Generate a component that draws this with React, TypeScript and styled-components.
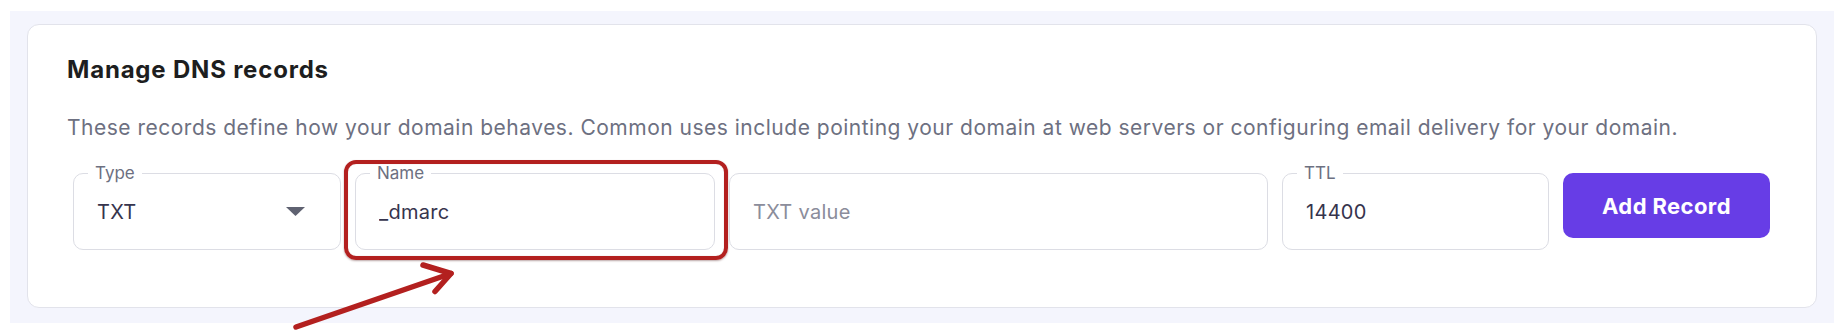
import React from "react";
import styled, { createGlobalStyle } from "styled-components";

const GlobalStyle = createGlobalStyle`
  html, body {
    margin: 0;
    padding: 0;
    background: #ffffff;
  }
  body {
    font-family: Inter, "Liberation Sans", Arial, sans-serif;
    -webkit-font-smoothing: antialiased;
  }
  * { box-sizing: border-box; }
`;

const Page = styled.div`
  position: relative;
  width: 1839px;
  height: 330px;
  overflow: hidden;
  padding: 11px 5px 0 10px;
`;

const Panel = styled.section`
  background: #f4f5fd;
  padding: 13px 17px 15px 17px;
`;

const Card = styled.div`
  background: #ffffff;
  border: 1px solid #e2e3eb;
  border-radius: 12px;
  padding: 31px 40px 57px 39px;
`;

const Title = styled.h2`
  margin: 0 0 30px 0;
  font-size: 24px;
  line-height: 28px;
  font-weight: 700;
  letter-spacing: 0.8px;
  color: #1d1e20;
`;

const Description = styled.p`
  margin: 0 0 31px 0;
  font-size: 21px;
  line-height: 28px;
  font-weight: 400;
  letter-spacing: 0.5px;
  color: #6d7081;
  white-space: nowrap;
`;

const Row = styled.div`
  display: flex;
  align-items: flex-start;
  gap: 14px;
  padding: 0 6px 0 6px;
`;

const Field = styled.div<{ $width?: number }>`
  position: relative;
  flex: ${(p) => (p.$width ? `0 0 ${p.$width}px` : "1 1 auto")};
  height: 77px;
  border: 1px solid #dcdde4;
  border-radius: 10px;
  background: #ffffff;
  display: flex;
  align-items: center;
  justify-content: space-between;
  padding: 0 35px 0 23px;
`;

const FieldLabel = styled.span`
  position: absolute;
  top: -11px;
  left: 14px;
  padding: 0 7px;
  background: #ffffff;
  font-size: 17px;
  line-height: 20px;
  color: #6d7081;
`;

const Value = styled.span`
  font-size: 20px;
  line-height: 28px;
  letter-spacing: 0.3px;
  color: #36344d;
`;

const TextInput = styled.input`
  border: none;
  outline: none;
  background: transparent;
  padding: 0;
  margin: 0;
  width: 100%;
  font-family: inherit;
  font-size: 20px;
  line-height: 28px;
  letter-spacing: 0.3px;
  color: #36344d;

  &::placeholder {
    color: #8b8d9b;
    opacity: 1;
  }
`;

const Caret = styled.svg`
  flex: 0 0 auto;
  width: 19px;
  height: 9px;
  display: block;
`;

const Highlight = styled.span`
  position: absolute;
  top: -14px;
  left: -12px;
  right: -14px;
  bottom: -11px;
  border: 4px solid #b3201f;
  border-radius: 12px;
  box-shadow: 0 1px 2px rgba(60, 0, 0, 0.35), inset 0 0 1px rgba(60, 0, 0, 0.3);
  pointer-events: none;
`;

const AddButton = styled.button`
  flex: 0 0 207px;
  height: 65px;
  border: none;
  border-radius: 10px;
  background: #673de6;
  color: #ffffff;
  font-family: inherit;
  font-size: 22px;
  font-weight: 700;
  letter-spacing: 0.4px;
  cursor: pointer;
`;

const ArrowLayer = styled.svg`
  position: absolute;
  left: 0;
  top: 0;
  width: 1839px;
  height: 330px;
  pointer-events: none;
  overflow: visible;
`;

export default function App() {
  return (
    <>
      <GlobalStyle />
      <Page>
        <Panel>
          <Card>
            <Title>Manage DNS records</Title>
            <Description>
              These records define how your domain behaves. Common uses include pointing your domain at web
              servers or configuring email delivery for your domain.
            </Description>
            <Row>
              <Field $width={268}>
                <FieldLabel>Type</FieldLabel>
                <Value>TXT</Value>
                <Caret viewBox="0 0 19 9">
                  <path d="M0 0 L19 0 L9.5 9 Z" fill="#5f6271" />
                </Caret>
              </Field>
              <Field $width={360}>
                <FieldLabel>Name</FieldLabel>
                <TextInput defaultValue="_dmarc" readOnly />
                <Highlight />
              </Field>
              <Field>
                <TextInput placeholder="TXT value" />
              </Field>
              <Field $width={267}>
                <FieldLabel>TTL</FieldLabel>
                <TextInput defaultValue="14400" readOnly />
              </Field>
              <AddButton>Add Record</AddButton>
            </Row>
          </Card>
        </Panel>
        <ArrowLayer viewBox="0 0 1839 330">
          <g
            stroke="#b3201f"
            strokeWidth="5.5"
            strokeLinecap="round"
            strokeLinejoin="round"
            fill="none"
          >
            <path d="M296 327 L451 273.5" />
            <path d="M423 265 L451 273.5 L435 291.5" />
          </g>
        </ArrowLayer>
      </Page>
    </>
  );
}
